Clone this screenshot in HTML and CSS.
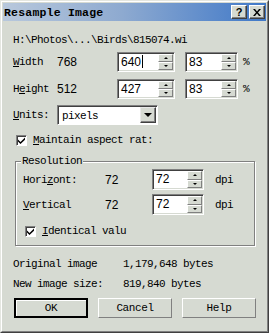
FILE: index.html
```html
<!DOCTYPE html>
<html>
<head>
<meta charset="utf-8">
<link rel="stylesheet" href="styles.css">
</head>
<body>
<div class="win">
  <div class="frame">
    <div class="titlebar">
      <span class="title">Resample Image</span>
      <span class="tbtns">
        <span class="tbtn q">?</span>
        <span class="tbtn x">
          <svg width="8" height="7" viewBox="0 0 8 7"><path d="M0 0h2l2 2.5L6 0h2L5 3.5 8 7H6L4 4.5 2 7H0l3-3.5z" fill="#000"/></svg>
        </span>
      </span>
    </div>
    <div class="content">
      <div class="path mono">H:\Photos\...\Birds\815074.wi</div>

      <div class="sizerow r-width">
        <span class="mono lbl"><u>W</u>idth</span>
        <span class="num val">768</span>
        <span class="field f1"><span class="txt num">640<i class="caret"></i></span><span class="spin"><b class="up"></b><b class="dn"></b></span></span>
        <span class="field f2"><span class="txt num">83</span><span class="spin"><b class="up"></b><b class="dn"></b></span></span>
        <span class="mono unit">%</span>
      </div>

      <div class="sizerow r-height">
        <span class="mono lbl">H<u>e</u>ight</span>
        <span class="num val">512</span>
        <span class="field f1"><span class="txt num">427</span><span class="spin"><b class="up"></b><b class="dn"></b></span></span>
        <span class="field f2"><span class="txt num">83</span><span class="spin"><b class="up"></b><b class="dn"></b></span></span>
        <span class="mono unit">%</span>
      </div>

      <div class="unitsrow">
        <span class="mono lbl"><u>U</u>nits:</span>
        <span class="select"><span class="seltxt mono">pixels</span><span class="dd"><b class="ddarrow"></b></span></span>
      </div>

      <div class="check r-maintain">
        <span class="box"><svg width="7" height="7" viewBox="0 0 7 7"><path d="M0 2.5l2.5 2.5L7 0.5V2.7L2.5 7 0 4.5z" fill="#000"/></svg></span>
        <span class="mono"><u>M</u>aintain aspect rat:</span>
      </div>

      <div class="group">
        <span class="legend mono">Resolution</span>
        <div class="resrow r-hor">
          <span class="mono rlbl">Hori<u>z</u>ont:</span>
          <span class="num rval">72</span>
          <span class="field f3"><span class="txt num">72</span><span class="spin"><b class="up"></b><b class="dn"></b></span></span>
          <span class="mono unit">dpi</span>
        </div>
        <div class="resrow r-ver">
          <span class="mono rlbl"><u>V</u>ertical</span>
          <span class="num rval">72</span>
          <span class="field f3"><span class="txt num">72</span><span class="spin"><b class="up"></b><b class="dn"></b></span></span>
          <span class="mono unit">dpi</span>
        </div>
        <div class="check r-ident">
          <span class="box"><svg width="7" height="7" viewBox="0 0 7 7"><path d="M0 2.5l2.5 2.5L7 0.5V2.7L2.5 7 0 4.5z" fill="#000"/></svg></span>
          <span class="mono"><u>I</u>dentical valu</span>
        </div>
      </div>

      <div class="inforow r-orig mono"><span class="ilbl">Original image</span><span>1,179,648 bytes</span></div>
      <div class="inforow r-new mono"><span class="ilbl">New image size:</span><span>819,840 bytes</span></div>

      <div class="buttons">
        <span class="btn def mono"><span>OK</span></span>
        <span class="btn mono"><span>Cancel</span></span>
        <span class="btn mono"><span>Help</span></span>
      </div>
    </div>
  </div>
</div>
</body>
</html>
```

FILE: styles.css
```css
html, body {
  margin: 0;
  padding: 0;
  background: #d6dad2;
}
.win {
  width: 269px;
  height: 333px;
  box-sizing: border-box;
  border: 1px solid;
  border-color: #e4e6e0 #404040 #404040 #e4e6e0;
  background: #d6dad2;
}
.frame {
  height: 100%;
  box-sizing: border-box;
  border: 1px solid;
  border-color: #ffffff #808080 #808080 #ffffff;
  padding: 1px;
  display: flex;
  flex-direction: column;
}
.titlebar {
  height: 18px;
  flex: none;
  display: flex;
  align-items: center;
  justify-content: space-between;
  background: linear-gradient(to right, #b8c8dc 0%, #8eaad0 45%, #3f78c8 100%);
}
.title {
  font-family: "Liberation Mono", "DejaVu Sans Mono", monospace;
  font-weight: bold;
  font-size: 11.5px;
  letter-spacing: 0.2px;
  color: #000;
  padding-left: 1px;
}
.tbtns {
  display: flex;
  gap: 2px;
  margin-right: 1px;
}
.tbtn {
  width: 16px;
  height: 14px;
  box-sizing: border-box;
  background: #d6dad2;
  border: 1px solid;
  border-color: #ffffff #404040 #404040 #ffffff;
  box-shadow: inset -1px -1px 0 #808080;
  display: flex;
  align-items: center;
  justify-content: center;
}
.tbtn.q {
  font-family: "Liberation Sans", Arial, sans-serif;
  font-weight: bold;
  font-size: 11px;
  line-height: 11px;
}
.content {
  flex: 1;
  position: relative;
  padding-left: 10px;
  display: flex;
  flex-direction: column;
}
.mono {
  font-family: "Liberation Mono", "DejaVu Sans Mono", monospace;
  font-size: 11px;
  letter-spacing: -0.6px;
  color: #000;
}
.num {
  font-family: "Liberation Sans", Arial, sans-serif;
  font-size: 12px;
  color: #000;
}
u { text-decoration: underline; text-underline-offset: 1px; }
.path {
  margin-top: 13px;
  height: 12px;
  line-height: 12px;
}
.sizerow {
  height: 20px;
  display: flex;
  align-items: center;
}
.r-width { margin-top: 6px; }
.r-height { margin-top: 7px; }
.lbl { width: 44px; flex: none; }
.val { width: 60px; flex: none; }
.field {
  height: 20px;
  box-sizing: border-box;
  border: 1px solid;
  border-color: #808080 #ffffff #ffffff #808080;
  box-shadow: inset 1px 1px 0 #404040, inset -1px -1px 0 #d6dad2;
  background: #fff;
  display: flex;
  padding: 2px 1px 1px 2px;
  flex: none;
}
.f1 { width: 58px; }
.f2 { width: 53px; margin-left: 10px; }
.f3 { width: 52px; }
.txt {
  flex: 1;
  line-height: 14px;
  padding-left: 1px;
  position: relative;
}
.caret {
  display: inline-block;
  width: 1px;
  height: 13px;
  background: #000;
  vertical-align: top;
  margin-left: 1px;
}
.spin {
  width: 15px;
  flex: none;
  display: flex;
  flex-direction: column;
  margin: -1px 0 0 0;
}
.spin b {
  flex: 1;
  box-sizing: border-box;
  border: 1px solid;
  border-color: #ffffff #808080 #808080 #ffffff;
  background: #d6dad2;
  position: relative;
}
.spin b::after {
  content: "";
  position: absolute;
  left: 50%;
  top: 50%;
  transform: translate(-50%, -50%);
  border-left: 2px solid transparent;
  border-right: 2px solid transparent;
}
.spin .up::after { border-bottom: 2px solid #000; }
.spin .dn::after { border-top: 2px solid #000; }
.unit { margin-left: 5px; }
.unitsrow {
  margin-top: 6px;
  height: 20px;
  display: flex;
  align-items: center;
}
.select {
  width: 101px;
  height: 20px;
  box-sizing: border-box;
  border: 1px solid;
  border-color: #808080 #ffffff #ffffff #808080;
  box-shadow: inset 1px 1px 0 #404040;
  background: #fff;
  display: flex;
  align-items: center;
  padding: 2px 1px 1px 2px;
}
.seltxt { flex: 1; padding-left: 2px; line-height: 14px; }
.dd {
  width: 16px;
  height: 16px;
  box-sizing: border-box;
  border: 1px solid;
  border-color: #e8e8e8 #404040 #404040 #e8e8e8;
  box-shadow: inset -1px -1px 0 #808080;
  background: #d6dad2;
  display: flex;
  align-items: center;
  justify-content: center;
  margin-top: -1px;
}
.ddarrow {
  width: 0;
  height: 0;
  border-left: 4px solid transparent;
  border-right: 4px solid transparent;
  border-top: 4px solid #000;
}
.check {
  display: flex;
  align-items: center;
  height: 12px;
  gap: 6px;
}
.r-maintain { margin-top: 9px; margin-left: 3px; }
.box {
  width: 11px;
  height: 11px;
  box-sizing: border-box;
  border: 1px solid;
  border-color: #808080 #ffffff #ffffff #808080;
  box-shadow: inset 1px 1px 0 #404040;
  background: #fff;
  display: flex;
  align-items: center;
  justify-content: center;
  flex: none;
}
.group {
  margin-top: 15px;
  margin-left: 2px;
  width: 240px;
  height: 85px;
  box-sizing: border-box;
  border: 1px solid #808080;
  box-shadow: 1px 1px 0 #ffffff, inset 1px 1px 0 #ffffff;
  position: relative;
  padding-left: 7px;
  display: flex;
  flex-direction: column;
}
.legend {
  position: absolute;
  top: -7px;
  left: 5px;
  padding: 0 1px 0 1px;
  background: #d6dad2;
  line-height: 12px;
}
.resrow {
  height: 21px;
  display: flex;
  align-items: center;
}
.r-hor { margin-top: 7px; }
.r-ver { margin-top: 4px; }
.rlbl { width: 82px; flex: none; }
.rval { width: 47px; flex: none; }
.f3 { height: 21px; }
.resrow .unit { margin-left: 11px; }
.r-ident { margin-top: 10px; margin-left: 2px; }
.inforow {
  height: 12px;
  line-height: 12px;
  display: flex;
}
.r-orig { margin-top: 12px; }
.r-new { margin-top: 8px; }
.ilbl { width: 110px; flex: none; }
.buttons {
  margin-top: 8px;
  display: flex;
  gap: 10px;
  margin-left: 1px;
}
.btn {
  width: 74px;
  height: 20px;
  box-sizing: border-box;
  border: 1px solid;
  border-color: #ffffff #808080 #808080 #ffffff;
  display: flex;
  align-items: center;
  justify-content: center;
  letter-spacing: -0.4px;
}
.btn.def {
  border: 2px solid #000;
  box-shadow: inset 1px 1px 0 #ffffff;
}
```
